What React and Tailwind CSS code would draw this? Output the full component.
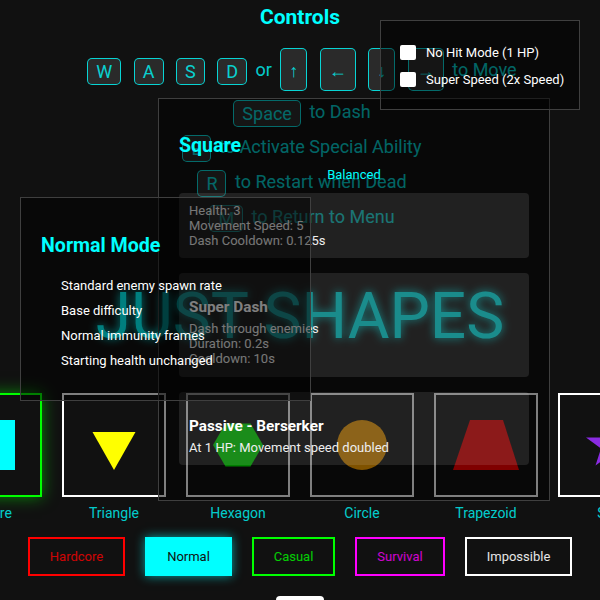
import React from 'react'

const SHAPES = [
  { label: 'Square', selected: true },
  { label: 'Triangle' },
  { label: 'Hexagon' },
  { label: 'Circle' },
  { label: 'Trapezoid' },
  { label: 'Star' }
]

function ShapeIcon({ name }) {
  switch (name) {
    case 'Square':
      return <div className="w-[50px] h-[50px] bg-[#00ffff]" />
    case 'Triangle':
      return (
        <svg width="50" height="50" viewBox="0 0 50 50">
          <polygon points="3.5,12 46.5,12 25,50" fill="#ffff00" />
        </svg>
      )
    case 'Hexagon':
      return (
        <svg width="50" height="50" viewBox="0 0 50 50">
          <polygon points="12.5,3.4 37.5,3.4 50,25 37.5,46.6 12.5,46.6 0,25" fill="#00ff00" />
        </svg>
      )
    case 'Circle':
      return <div className="w-[50px] h-[50px] rounded-full bg-[#ffa500]" />
    case 'Trapezoid':
      return (
        <svg width="66" height="50" viewBox="0 0 66 50">
          <polygon points="17,0 50,0 66,50 0,50" fill="#ff0000" />
        </svg>
      )
    default:
      return (
        <svg width="50" height="50" viewBox="0 0 50 50">
          <polygon points="25,0 30.5,17.5 49,17.5 34,28.5 39.5,45.5 25,35 10.5,45.5 16,28.5 1,17.5 19.5,17.5" fill="#8a2be2" />
        </svg>
      )
  }
}

function Key({ children, className = '' }) {
  return (
    <span className={`inline-block mx-1 px-2 h-[27px] leading-[25px] align-middle border border-[#00ffff]/80 rounded-[5px] bg-[#2a2a2a] ${className}`}>
      {children}
    </span>
  )
}

function ArrowKey({ children, className = '' }) {
  return (
    <Key className={`!h-[43px] !leading-[44px] !px-0 -translate-y-[2px] text-center ${className}`}>{children}</Key>
  )
}

function ShapeCard({ label, selected }) {
  return (
    <div className="flex flex-col items-center shrink-0 w-[104px]">
      <div className={`w-[104px] h-[104px] flex items-center justify-center border-2 bg-[#111] ${selected ? 'border-[#00ff00] shadow-[0_0_15px_rgba(0,255,0,0.5)]' : 'border-white'}`}>
        <ShapeIcon name={label} />
      </div>
      <div className="mt-2 text-sm text-[#00ffff]/80 leading-[16px]">{label}</div>
    </div>
  )
}

function DifficultyButton({ label, className }) {
  return (
    <div className={`h-[39px] flex items-center justify-center text-[13px] border-2 ${className}`}>{label}</div>
  )
}

export default function App() {
  return (
    <div className="relative w-[600px] h-[600px] overflow-hidden bg-[#111] text-white font-['Roboto',sans-serif]">
      {/* Controls */}
      <div className="pt-[5px] text-center text-[#00ffff]/80 text-lg">
        <h2 className="text-[21px] font-bold leading-6 text-[#00ffff] mb-4">Controls</h2>
        <div className="h-[49px] leading-[49px]">
          <Key>W</Key> <Key>A</Key> <Key>S</Key> <Key>D</Key> or{' '}
          <ArrowKey className="w-[27px]">↑</ArrowKey> <ArrowKey className="w-[36px]">←</ArrowKey>{' '}
          <ArrowKey className="w-[27px]">↓</ArrowKey> <ArrowKey className="w-[36px]">→</ArrowKey> to Move
        </div>
        <div className="h-[35px] leading-[35px]"><Key>Space</Key> to Dash</div>
        <div className="h-[35px] leading-[35px]"><Key>E</Key> to Activate Special Ability</div>
        <div className="h-[35px] leading-[35px]"><Key>R</Key> to Restart when Dead</div>
        <div className="h-[35px] leading-[35px]"><Key>M</Key> to Return to Menu</div>
      </div>

      {/* Title */}
      <h1 className="mt-[45px] text-center text-[64px] leading-[75px] font-normal text-[#00ffff] [text-shadow:0_0_10px_#00ffff]">JUST SHAPES</h1>

      {/* Shape carousel */}
      <div className="mt-[39px] flex gap-5 -ml-[62px] w-[800px]">
        {SHAPES.map(s => (
          <ShapeCard key={s.label} label={s.label} selected={s.selected} />
        ))}
      </div>

      {/* Difficulty */}
      <div className="mt-4 flex justify-center gap-5">
        <DifficultyButton label="Hardcore" className="w-[97px] border-[#ff0000] text-[#ff0000]/80" />
        <DifficultyButton label="Normal" className="w-[87px] border-[#00ffff] bg-[#00ffff] text-[#111] shadow-[0_0_10px_rgba(0,255,255,0.6)]" />
        <DifficultyButton label="Casual" className="w-[83px] border-[#00ff00] text-[#00ff00]/80" />
        <DifficultyButton label="Survival" className="w-[90px] border-[#ff00ff] text-[#ff00ff]/80" />
        <DifficultyButton label="Impossible" className="w-[107px] border-white text-white/90" />
      </div>

      <div className="mt-5 mx-auto w-[48px] h-8 bg-white rounded-sm" />

      {/* Character stats panel */}
      <div className="absolute left-[158px] top-[98px] w-[392px] h-[403px] bg-black/50 border border-[#3f3f3f] pt-[35px] px-5">
        <h3 className="text-[19.6px] font-bold leading-6 text-[#00ffff]">Square</h3>
        <p className="text-center text-[13px] leading-4 mt-[9px] text-[#00ffff]">Balanced</p>
        <div className="mt-[10px] h-[65px] rounded bg-white/10 px-[10px] pt-[10px] text-[13px] leading-[15px] text-[#eee]">
          <div>Health: 3</div>
          <div>Movement Speed: 5</div>
          <div>Dash Cooldown: 0.125s</div>
        </div>
        <div className="mt-[15px] h-[104px] rounded bg-white/10 px-[10px] pt-[25px] text-[13px] leading-[15px] text-[#eee]">
          <div className="text-[15.3px] font-bold leading-[19px] mb-[4px] text-white">Super Dash</div>
          <div>Dash through enemies</div>
          <div>Duration: 0.2s</div>
          <div>Cooldown: 10s</div>
        </div>
        <div className="mt-[15px] h-[73px] rounded bg-white/10 px-[10px] pt-[25px] text-[13px] text-white">
          <div className="text-[15.3px] font-bold leading-[19px] mb-[4px]">Passive - Berserker</div>
          <div className="leading-[15px] text-[#eee]">At 1 HP: Movement speed doubled</div>
        </div>
      </div>

      {/* Mode description panel */}
      <div className="absolute left-[20px] top-[197px] w-[291px] h-[204px] bg-black/50 border border-[#3f3f3f] pt-[36px] pl-5">
        <h3 className="text-[19.6px] font-bold leading-6 text-[#00ffff]">Normal Mode</h3>
        <ul className="mt-[15px] pl-5 text-[13px] leading-[25px] text-white">
          <li>Standard enemy spawn rate</li>
          <li>Base difficulty</li>
          <li>Normal immunity frames</li>
          <li>Starting health unchanged</li>
        </ul>
      </div>

      {/* Options panel */}
      <div className="absolute left-[380px] top-[20px] w-[200px] h-[90px] bg-black/50 border border-[#3f3f3f] pt-[18px] pl-[19px] text-[13px] text-white">
        <label className="flex items-center h-[27px]">
          <span className="w-[16px] h-[15px] bg-white rounded-[2px] mr-[10px]" />
          No Hit Mode (1 HP)
        </label>
        <label className="flex items-center h-[27px]">
          <span className="w-[16px] h-[15px] bg-white rounded-[2px] mr-[10px]" />
          Super Speed (2x Speed)
        </label>
      </div>
    </div>
  )
}
